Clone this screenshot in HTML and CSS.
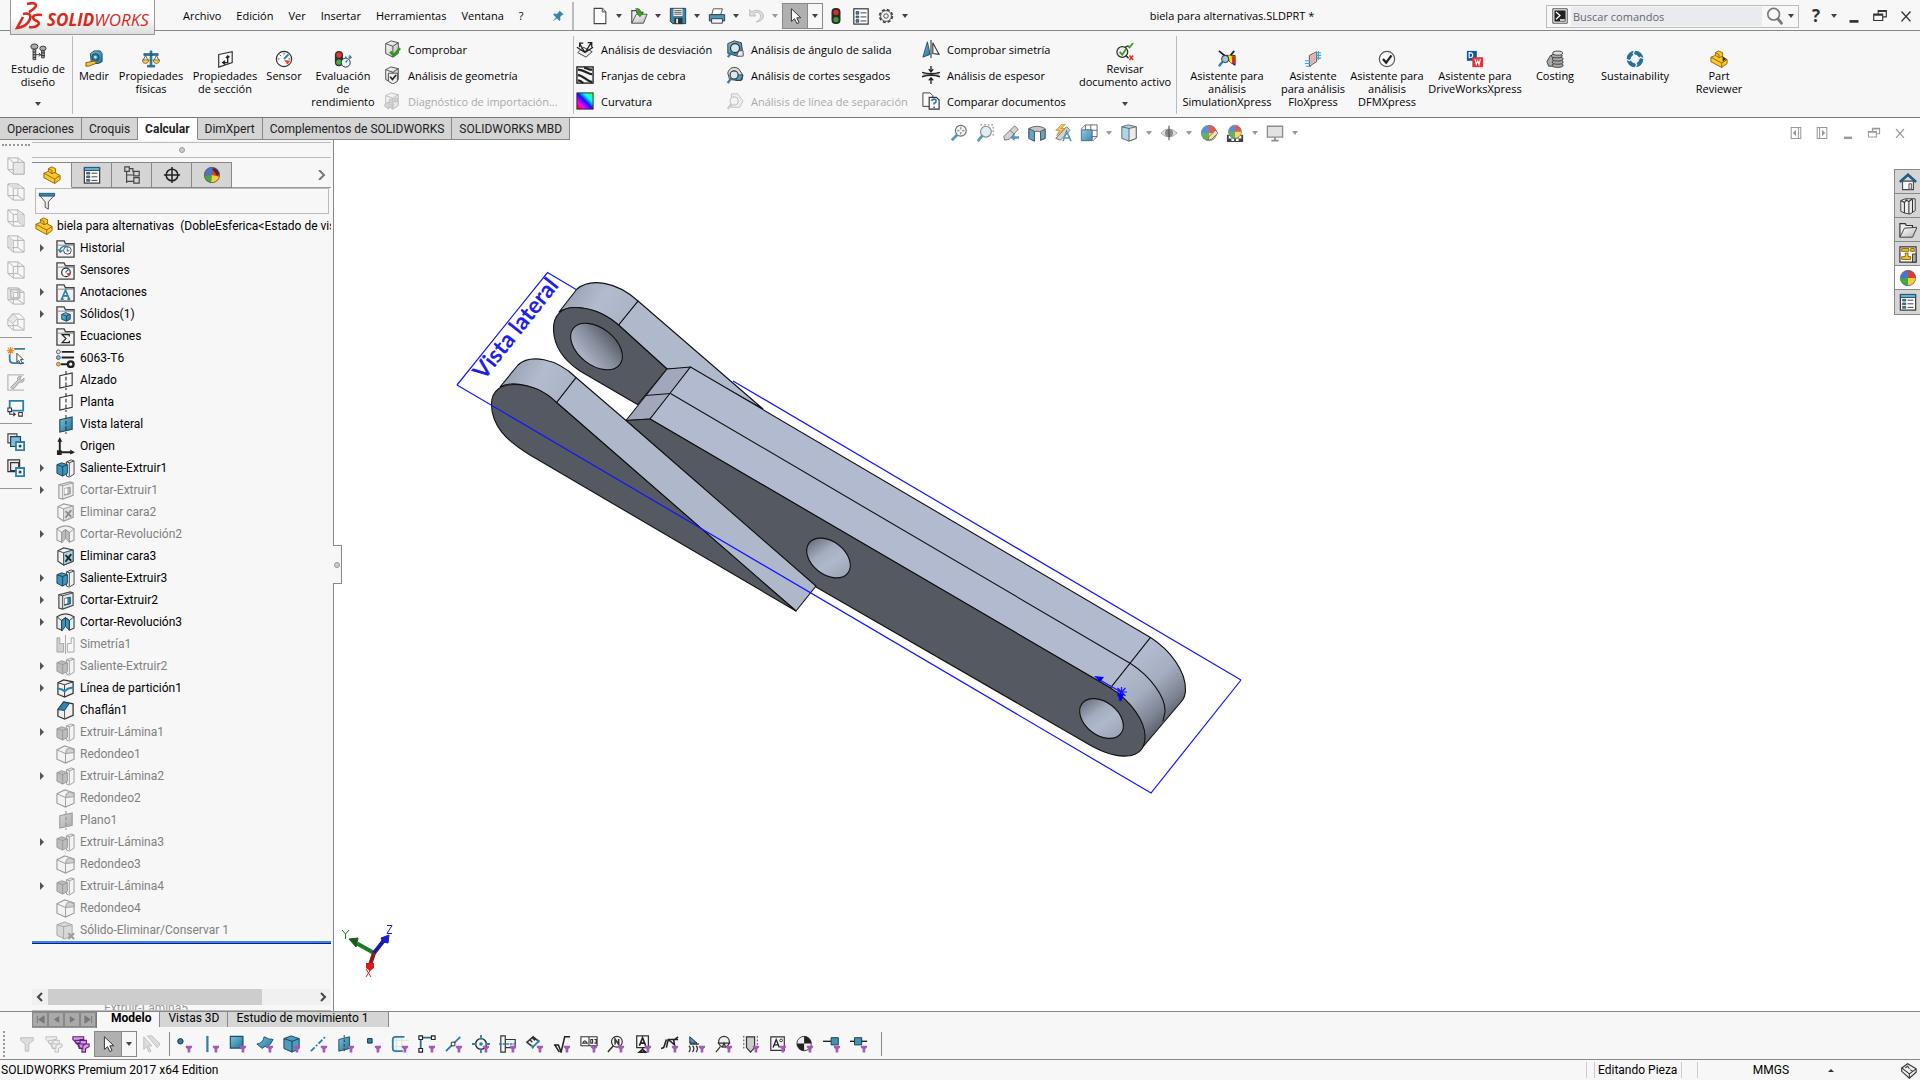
FILE: index.html
```html
<!DOCTYPE html>
<html lang="es">
<head>
<meta charset="utf-8">
<title>biela para alternativas.SLDPRT</title>
<link rel="stylesheet" href="styles.css">
</head>
<body>
<svg class="defs" aria-hidden="true">
<defs>
<linearGradient id="g-blue" x1="0" y1="0" x2="1" y2="1"><stop offset="0" stop-color="#7cc4e0"/><stop offset="1" stop-color="#1f6f96"/></linearGradient>
<linearGradient id="g-gray" x1="0" y1="0" x2="1" y2="1"><stop offset="0" stop-color="#fff"/><stop offset="1" stop-color="#b8b8b8"/></linearGradient>
<linearGradient id="g-rain" x1="0" y1="1" x2="1" y2="0"><stop offset="0" stop-color="#f00"/><stop offset=".25" stop-color="#f0f"/><stop offset=".5" stop-color="#11f"/><stop offset=".7" stop-color="#0ff"/><stop offset="1" stop-color="#5f0"/></linearGradient>
<symbol id="fun" viewBox="0 0 20 20"><path d="M12 12h7v2l-2 1.500v4h-3v-4l-2-1.500z" fill="#a45bb8"/></symbol>
<symbol id="i-arrow" viewBox="0 0 20 20"><path d="M6 2l0 14 3.500-3 2.500 5.500 2.500-1.200-2.500-5.300h4.500z" fill="#fff" stroke="#333" stroke-width="1.100"/></symbol>
<symbol id="i-part" viewBox="0 0 20 20"><path d="M1 8l5-2V3l3.500-2L14 3v5l5 2.500V15l-6 4.500L1 13z" fill="#fbc72c" stroke="#8a6406"/><path d="M1 8l12 6.500 6-4M13 14.500v5M6 6l4 2.500V5L6 3M10 8.500L14 7" fill="none" stroke="#8a6406"/></symbol>
<symbol id="i-bolt" viewBox="0 0 20 20"><g fill="#aaa" stroke="#333"><ellipse cx="6" cy="4" rx="4" ry="3"/><path d="M4.500 7h3v11.500h-3z"/><ellipse cx="15.500" cy="6" rx="3.500" ry="2.500"/><path d="M14 8.500h3v8h-3z"/></g><path d="M4.500 10h3m-3 3h3m-3 3h3m6-5h4m-4 3h4M8 13h5l-2-2m2 2l-2 2" stroke="#222" fill="none"/></symbol>
<symbol id="i-medir" viewBox="0 0 20 20"><path d="M6 4l4-3h7l2 3v9l-4 2H7z" fill="url(#g-blue)" stroke="#1d4c66"/><circle cx="11.500" cy="8" r="4" fill="#2f81a8" stroke="#144"/><circle cx="11.500" cy="8" r="1.500" fill="#c7e6f2"/><path d="M1 14l11-2v3L4 18H1z" fill="#f4c33f" stroke="#7a5a10"/></symbol>
<symbol id="i-scale" viewBox="0 0 20 20"><path d="M9 1h2v16h3v2H6v-2h3zM2 4h16v2H2z" fill="#2d7fa8" stroke="#1a516e" stroke-width=".7"/><path d="M1 12l3-6 3 6zM13 12l3-6 3 6z" fill="none" stroke="#555"/><path d="M0 11h8q-1 4-4 4t-4-4zM12 11h8q-1 4-4 4t-4-4z" fill="#f5cd5a" stroke="#6b510f" stroke-width=".8"/></symbol>
<symbol id="i-sect" viewBox="0 0 20 20"><path d="M3 5l15-3v12L3 19z" fill="#fafafa" stroke="#333" stroke-width="1.300"/><path d="M8 14h5V7m-2 2l2-2.500L15 8M10 12l-2.500 2 2.500 2" fill="none" stroke="#222" stroke-width="1.500"/></symbol>
<symbol id="i-gauge" viewBox="0 0 20 20"><circle cx="10" cy="10" r="8.500" fill="#fdfdfd" stroke="#333" stroke-width="1.300"/><path d="M10 3v2M3 10h2M17 10h-2M5 5l1.500 1.500" stroke="#333"/><path d="M10 10l5-5" stroke="#2d7fa8" stroke-width="2"/><path d="M10 11l7 1-3 4z" fill="#e8412b"/></symbol>
<symbol id="i-eval" viewBox="0 0 20 20"><rect x="1" y="1" width="9" height="17" rx="4.500" fill="#333"/><circle cx="5.500" cy="5.500" r="3" fill="#e9352a"/><circle cx="5.500" cy="13.500" r="3" fill="#4caf3c"/><circle cx="13" cy="14" r="5" fill="#e7f3f9" stroke="#222"/><path d="M13 14l2-3M13 7v2M16 8h3l-2-2m2 2l-2 2" stroke="#2d7fa8" fill="none" stroke-width="1.300"/></symbol>
<symbol id="i-box" viewBox="0 0 20 20"><path d="M3 4l6-3 8 2v12l-6 4-8-4z" fill="url(#g-gray)" stroke="#444"/><path d="M3 4l8 3 6-4M11 7v12" fill="none" stroke="#444"/></symbol>
<symbol id="i-check" viewBox="0 0 20 20"><use href="#i-box"/><path d="M8 13l4 4 7-8" fill="none" stroke="#2f9a13" stroke-width="3"/></symbol>
<symbol id="i-geo" viewBox="0 0 20 20"><use href="#i-box"/><path d="M6 8h10v9l-5 3-5-3z" fill="#eee" stroke="#444"/><path d="M8 12l2.500 3 4-5" fill="none" stroke="#222" stroke-width="1.800"/></symbol>
<symbol id="i-diag" viewBox="0 0 20 20"><use href="#i-box"/><path d="M7 8h4v4H7zM13 7h3v4h-3zM1 15l5-4v2.500h5v3H6V19z" fill="#999" stroke="#555"/></symbol>
<symbol id="i-dev" viewBox="0 0 20 20"><path d="M2 14l6-6 10 5-7 6z" fill="#eee" stroke="#333"/><path d="M10 14L4 4M10 14l7-11M10 14L1 8M10 14l9-6M4 8V3.500h4M13 3h4.500v5" fill="none" stroke="#222" stroke-width="1.400"/></symbol>
<symbol id="i-zebra" viewBox="0 0 20 20"><rect x="1" y="1" width="18" height="18" fill="#f4f4f4" stroke="#222" stroke-width="1.500"/><path d="M2 4c8 0 12 6 16 5M2 10c6 0 10 7 16 8M9 2c4 0 6 3 9 2M2 16c3 0 5 2 6 3" fill="none" stroke="#222" stroke-width="2.500"/></symbol>
<symbol id="i-curv" viewBox="0 0 20 20"><rect x="1" y="1" width="18" height="18" fill="url(#g-rain)" stroke="#222"/></symbol>
<symbol id="i-draft" viewBox="0 0 20 20"><path d="M2 4l7-3 8 2 2 14-6 1-11-3z" fill="url(#g-blue)" stroke="#333"/><path d="M14 12h5v6h-7z" fill="#eee" stroke="#555"/><circle cx="10" cy="9" r="5" fill="#d8e8ef" stroke="#333" stroke-width="1.300"/><path d="M7 13l-5 6" stroke="#2d7fa8" stroke-width="2.500"/></symbol>
<symbol id="i-under" viewBox="0 0 20 20"><path d="M2 8C3 2 9 0 14 3l4 6v6l-5 1-9-1z" fill="#ddd" stroke="#333"/><path d="M12 10h7l-2 6h-6z" fill="url(#g-blue)" stroke="#234"/><circle cx="9" cy="10" r="4.500" fill="#d8e8ef" stroke="#333" stroke-width="1.300"/><path d="M6 13l-4 6" stroke="#2d7fa8" stroke-width="2.500"/></symbol>
<symbol id="i-part-line" viewBox="0 0 20 20"><path d="M6 2h7l6 8-4 7H6z" fill="#ddd" stroke="#555"/><circle cx="9" cy="10" r="4.500" fill="#eee" stroke="#444"/><path d="M6 13l-4 6" stroke="#777" stroke-width="2.500"/></symbol>
<symbol id="i-sym" viewBox="0 0 20 20"><path d="M1 19L6 2l3 14z" fill="url(#g-blue)" stroke="#1d4c66"/><path d="M19 16L12 3v12zM10 0v20" fill="none" stroke="#333" stroke-width="1.200"/></symbol>
<symbol id="i-thick" viewBox="0 0 20 20"><path d="M1 7c5 2 13 2 18 0v5c-5-2-13-2-18 0z" fill="#bbb"/><path d="M0 7c6 2 14 2 20 0M0 12c6-2 14-2 20 0M10 0v6M7.500 3.500L10 6.500l2.500-3M10 20v-7M7.500 16l2.500-3 2.500 3" fill="none" stroke="#222" stroke-width="1.500"/></symbol>
<symbol id="i-comp" viewBox="0 0 20 20"><path d="M1 1h8l3 3v12H1z" fill="#fafafa" stroke="#333"/><path d="M8 6h8l3 3v10H8z" fill="#fafafa" stroke="#333" stroke-width="1.300"/><path d="M11 10q0-2 2.500-2t2 2.500q0 1.500-2 2v1.500M13.500 16v2" fill="none" stroke="#2d7fa8" stroke-width="2"/></symbol>
<symbol id="i-rev" viewBox="0 0 20 20"><circle cx="7" cy="10" r="6" fill="#f0f0f0" stroke="#333" stroke-width="1.400"/><path d="M4 10l3 3 4-6M13 3l2 2 4-5" fill="none" stroke="#3c9c1e" stroke-width="2"/><path d="M10 5l3-2m-2 11l3 3" stroke="#222" stroke-width="1.500"/><path d="M15 14l4 5m0-5l-4 5" stroke="#d8341c" stroke-width="1.800"/></symbol>
<symbol id="i-sim" viewBox="0 0 20 20"><path d="M3 3l5 3h11v11l-5-3z" fill="url(#g-rain)" stroke="#222"/><path d="M11 6h5v9l-3-2z" fill="#fe0"/><path d="M15 7h4v9l-3-2z" fill="#e22"/><path d="M1 1l6 5M18 1l-4 5" stroke="#222" stroke-width="2"/><circle cx="8" cy="10" r="4" fill="#9fc7d8" stroke="#222"/><path d="M5 13l-4 5" stroke="#2d7fa8" stroke-width="2.500"/></symbol>
<symbol id="i-flo" viewBox="0 0 20 20"><path d="M6 6l8-4v11l-8 5z" fill="#f4dcd8" stroke="#444"/><path d="M8 6v10M10 5v10M12 4v10" stroke="#d98a80" fill="none"/><path d="M1 12h6M1 15h6M2 18h6M13 3h6M13 6h6M13 9h6M16 1v10" stroke="#38a5d8" stroke-width="1.200"/></symbol>
<symbol id="i-dfm" viewBox="0 0 20 20"><circle cx="10" cy="10" r="8.500" fill="#fbfbfb" stroke="#555" stroke-width="1.300"/><path d="M5.500 10l3.500 4 6-8" fill="none" stroke="#222" stroke-width="2.500"/></symbol>
<symbol id="i-dw" viewBox="0 0 20 20"><path d="M1 1h11v11H1z" fill="#0a56a5"/><path d="M7 8h12v11H7z" fill="#ee3135"/><path d="M3.500 3v5.500q4 0 4-2.700t-4-2.800zM10 10l1.500 6 1.500-4 1.500 4 1.500-6" fill="none" stroke="#fff" stroke-width="1.300"/></symbol>
<symbol id="i-cost" viewBox="0 0 20 20"><g fill="#aaa" stroke="#333"><path d="M1 13l4-7h5l-2 12H3z"/><ellipse cx="13" cy="17" rx="6" ry="2.300"/><ellipse cx="13" cy="13.500" rx="6" ry="2.300"/><ellipse cx="13" cy="10" rx="6" ry="2.300"/><ellipse cx="12" cy="6.500" rx="6" ry="2.300"/><ellipse cx="13" cy="3.500" rx="5.500" ry="2.300" fill="#ddd"/></g></symbol>
<symbol id="i-sust" viewBox="0 0 20 20"><circle cx="10" cy="10" r="7" fill="none" stroke="#2b7096" stroke-width="4.500"/><path d="M10 0l-2 4 3 3M20 10l-4-2-3 3M10 20l2-4-3-3M0 10l4 2 3-3" fill="none" stroke="#e8f2f7" stroke-width="1.400"/></symbol>
<symbol id="i-prev" viewBox="0 0 20 20"><use href="#i-part"/><path d="M14 7l4 3-4 3z" fill="#333"/></symbol>
<symbol id="i-new" viewBox="0 0 20 20"><path d="M3.500 1.500h9l4 4V18.500h-13z" fill="#fdfdfd" stroke="#444" stroke-width="1.200"/><path d="M12.500 1.500v4h4" fill="#ddd" stroke="#444"/></symbol>
<symbol id="i-open" viewBox="0 0 20 20"><path d="M2 18V4h5l1 2h6v3" fill="#eee" stroke="#444" stroke-width="1.200"/><path d="M2 18L7 8h12l-4 10z" fill="url(#g-gray)" stroke="#444"/><path d="M6 2c5-1 6 2 6 4h3l-4 5-4-5h2c0-2-1-3-3-4z" fill="#3da321" stroke="#226a0d" stroke-width=".6"/></symbol>
<symbol id="i-save" viewBox="0 0 20 20"><path d="M1.500 1.500h17v17H4l-2.500-2.500z" fill="#3b87ab" stroke="#234"/><path d="M5 2h10v8H5z" fill="#eee"/><path d="M6 4h8M6 6h8M6 8h8" stroke="#555"/><path d="M6 12h9v7H6z" fill="#333"/><path d="M8 13h2v5H8z" fill="#eee"/></symbol>
<symbol id="i-print" viewBox="0 0 20 20"><path d="M6 2h10l-2 7H4z" fill="#fff" stroke="#444"/><path d="M1.500 8.500h17v7h-17z" fill="#4a98bd" stroke="#234"/><path d="M4 13h12v5H4z" fill="#f5f5f5" stroke="#333"/></symbol>
<symbol id="i-undo" viewBox="0 0 20 20"><path d="M3 3v7h7l-2.500-2.500c3-3 8-1 7.500 3 0 3-2 5-5 6 6 0 9-4 8-8C17 4 10 2 5.500 5.500z" fill="#ddd" stroke="#bbb"/></symbol>
<symbol id="i-light" viewBox="0 0 20 20"><rect x="5" y="1" width="10" height="18" rx="4.500" fill="#2a2a2a"/><circle cx="10" cy="6" r="3" fill="#d62d20"/><circle cx="10" cy="14" r="3" fill="#3c9b35"/></symbol>
<symbol id="i-list" viewBox="0 0 20 20"><rect x="2" y="2" width="16" height="17" fill="#fafafa" stroke="#333" stroke-width="1.300"/><path d="M4.500 5h3v3h-3zM4.500 10h3v2h-3zM4.500 14h3v3h-3z" fill="#3b87ab" stroke="#234" stroke-width=".7"/><path d="M9.500 6.500H16M9.500 11H16M9.500 15.500H16" stroke="#333"/></symbol>
<symbol id="i-prop" viewBox="0 0 20 20"><rect x="1.500" y="2" width="17" height="17" fill="#fafafa" stroke="#333" stroke-width="1.300"/><path d="M4 7h3.500v2H4zM4 11h3.500v2H4zM4 15h3.500v2H4z" fill="#3b87ab" stroke="#234" stroke-width=".7"/><path d="M9.500 8H16M9.500 12H16M9.500 16H16" stroke="#333"/><path d="M1.500 1.500h17V5h-17z" fill="#5fb2d5" stroke="#1d4c66"/></symbol>
<symbol id="i-gear" viewBox="0 0 20 20"><circle cx="10" cy="10" r="7" fill="none" stroke="#444" stroke-width="2" stroke-dasharray="3.300 2.200"/><circle cx="10" cy="10" r="6" fill="#f2f2f2" stroke="#444"/><circle cx="10" cy="10" r="2.500" fill="#f7f7f7" stroke="#444"/></symbol>
<symbol id="i-pin" viewBox="0 0 20 20"><path d="M12 2l6 6-2 .5-3 3 .5 4-1.500 1.500L3 8l1.500-1.500 4 .5 3-3zM7 12l1.500 1.500L2 18z" fill="#3b82ab"/></symbol>
<symbol id="i-mag" viewBox="0 0 20 20"><circle cx="8.500" cy="8" r="6.500" fill="none" stroke="#777" stroke-width="1.800"/><path d="M13 13l5 6" stroke="#777" stroke-width="3"/></symbol>
<symbol id="i-cmd" viewBox="0 0 20 20"><path d="M1 1h18v18H1z" fill="#fff" stroke="#222"/><path d="M3 3h14v14H3z" fill="#222"/><path d="M5 5l5 4.500L5 14M10 15h6" stroke="#fff" stroke-width="1.600" fill="none"/></symbol>
<symbol id="i-min" viewBox="0 0 20 20"><path d="M5 14.500h10v3H5z" fill="currentColor"/></symbol>
<symbol id="i-rest" viewBox="0 0 20 20"><path d="M3 8h10v7H3zM3 9h10M8 8V4h9v7h-4M8 5h9" fill="none" stroke="currentColor" stroke-width="1.300"/></symbol>
<symbol id="i-x" viewBox="0 0 20 20"><path d="M5 5l10 11M15 5L5 16" stroke="currentColor" stroke-width="1.500"/></symbol>
<symbol id="i-dockl" viewBox="0 0 20 20"><path d="M4 3h12v14H4zM13 3v14" fill="none" stroke="#999" stroke-width="1.300"/><path d="M10 6v8l-4-4z" fill="#999"/></symbol>
<symbol id="i-dockr" viewBox="0 0 20 20"><path d="M4 3h12v14H4zM7 3v14" fill="none" stroke="#999" stroke-width="1.300"/><path d="M10 6v8l4-4z" fill="#999"/></symbol>
<symbol id="i-zfit" viewBox="0 0 20 20"><circle cx="12" cy="7.500" r="6" fill="#f2f2f2" stroke="#555" stroke-width="1.300"/><path d="M12 3.500v8M8 7.500h8" stroke="#444" stroke-dasharray="2.500 3"/><path d="M8 12l-6 6" stroke="#3b87ab" stroke-width="3"/></symbol>
<symbol id="i-zarea" viewBox="0 0 20 20"><path d="M5 1h14v14" fill="none" stroke="#555" stroke-dasharray="2 2"/><circle cx="11" cy="8.500" r="6" fill="#dfe9ee" stroke="#777" stroke-width="1.300"/><path d="M7 13l-5 6" stroke="#3b87ab" stroke-width="3"/></symbol>
<symbol id="i-zprev" viewBox="0 0 20 20"><path d="M2 14L14 2l4 4-10 11-5 1z" fill="#ccc" stroke="#555"/><path d="M9 7l5 5" stroke="#555"/><path d="M9 15l5-4v2.500h5v3h-5V19z" fill="#3b87ab"/></symbol>
<symbol id="i-secv" viewBox="0 0 20 20"><path d="M1 5q9-5 18 0v11l-5 2V9q-4-2-7 0v10l-6-3z" fill="#bbb" stroke="#444"/><path d="M1 5l6 3v11l-6-3zM14 8l5-2v10l-5 2z" fill="#4a98bd" stroke="#234"/></symbol>
<symbol id="i-dyn" viewBox="0 0 20 20"><path d="M2 16L14 3l4 4L7 18z" fill="#ccc" stroke="#555"/><path d="M9 0L2 7h4l-3 6 9-8H8l5-5z" fill="#ffb52e" stroke="#a25b00" stroke-width=".7"/><path d="M10 19l4-11 5 11M12 15.500h5" stroke="#3b87ab" stroke-width="1.800" fill="none"/></symbol>
<symbol id="i-cube" viewBox="0 0 20 20"><path d="M6 1h13v13H6zM12 1v13M6 7h13M1 6l5-5M14 19l5-5" fill="none" stroke="#444"/><path d="M1.500 6.500h12v12h-12z" fill="url(#g-blue)" stroke="#1d4c66"/></symbol>
<symbol id="i-shade" viewBox="0 0 20 20"><path d="M2 3l7-2 9 2v13l-8 3-8-3z" fill="#9dd0e6" stroke="#444"/><path d="M10 5l8-2v13l-8 3z" fill="#e8e8e8" stroke="#444"/><path d="M2 3l8 2" stroke="#444"/></symbol>
<symbol id="i-eye" viewBox="0 0 20 20"><path d="M1 10q9-9 18 0-9 9-18 0z" fill="#ddd" stroke="#999"/><circle cx="10" cy="10" r="4.500" fill="#777"/><path d="M10 2v16" stroke="#333" stroke-width="1.200"/></symbol>
<symbol id="i-ball" viewBox="0 0 20 20"><circle cx="10" cy="10" r="8.500" fill="#3f78d8"/><path d="M10 10V1.500a8.500 8.500 0 0 1 8.500 8.500z" fill="#e23b30"/><path d="M10 10h8.500A8.500 8.500 0 0 1 10 18.500z" fill="#fbcf3a"/><path d="M10 10v8.500A8.500 8.500 0 0 1 1.500 10z" fill="#44a83d"/><circle cx="10" cy="10" r="8.500" fill="none" stroke="#666" stroke-width=".8"/></symbol>
<symbol id="i-disp" viewBox="0 0 20 20"><circle cx="10" cy="10" r="8.500" fill="#e23b30"/><path d="M10 10H1.500A8.500 8.500 0 0 1 10 1.500z" fill="#3f78d8"/><path d="M10 10l-8.500 1A8.500 8.500 0 0 0 9 18.500z" fill="#44a83d"/><path d="M10 10l-1 8.500A8.500 8.500 0 0 0 18 12z" fill="#fbcf3a"/><path d="M10 3q6-2 8 6l-2 2z" fill="#333"/><circle cx="10" cy="10" r="8.500" fill="none" stroke="#555" stroke-width=".8"/></symbol>
<symbol id="i-app" viewBox="0 0 20 20"><use href="#i-ball"/><path d="M9 18l1-4 7-7 3 3-7 7z" fill="#f2d9a0" stroke="#555"/></symbol>
<symbol id="i-scene" viewBox="0 0 20 20"><path d="M1 12h18v8H1z" fill="#222"/><path d="M3 13h3v3H3zM14 13h3v3h-3zM6 16h3v3H6zM11 16h3v3h-3z" fill="#fff"/><use href="#i-ball" width="17" height="17" x="1.500"/></symbol>
<symbol id="i-mon" viewBox="0 0 20 20"><path d="M1.500 2.500h17v12h-17z" fill="#ddd" stroke="#777" stroke-width="1.400"/><path d="M10 15v4M6 18.500h8" stroke="#777" stroke-width="2"/></symbol>
<symbol id="i-tree" viewBox="0 0 20 20"><path d="M2 1h5v5H2zM4 6v13M4 10h8M4 17h8M12 6h6v5h-6zM12 13h6v6h-6zM7 3h4v4" fill="none" stroke="#444" stroke-width="1.300"/></symbol>
<symbol id="i-cross" viewBox="0 0 20 20"><circle cx="10" cy="10" r="6.500" fill="none" stroke="#222" stroke-width="1.700"/><path d="M10 1v18M1 10h18" stroke="#222" stroke-width="1.700"/></symbol>
<symbol id="i-filter" viewBox="0 0 20 20"><path d="M2 4h16l-6.500 7v8L8 17v-6z" fill="#eee" stroke="#444"/><path d="M1.500 1.500h17v3h-17z" fill="#2f86b0" stroke="#1d5674"/></symbol>
<symbol id="i-fold" viewBox="0 0 20 20"><path d="M1 19V2h7.500l1.500 3h9v14z" fill="#f3f3f3" stroke="#444" stroke-width="1.400"/><path d="M1.500 6.500h17" stroke="#888"/></symbol>
<symbol id="i-fhist" viewBox="0 0 20 20"><use href="#i-fold"/><circle cx="12" cy="12" r="4" fill="#fff" stroke="#444"/><path d="M12 10v2.500h2M4 13c0-5 6-7 9-4M2.500 11l2 3 2.500-2.500" fill="none" stroke="#2d7fa8" stroke-width="1.400"/></symbol>
<symbol id="i-fsens" viewBox="0 0 20 20"><use href="#i-fold"/><circle cx="10.500" cy="12" r="4.500" fill="#fff" stroke="#333" stroke-width="1.300"/><path d="M10 12l3-3" stroke="#2d7fa8" stroke-width="1.500"/><path d="M11 13l4-.5-2 3.500z" fill="#e33"/></symbol>
<symbol id="i-fann" viewBox="0 0 20 20"><use href="#i-fold"/><path d="M6 17l4-9.500L14 17M7.500 13.500h5M5 17h3m4 0h3" fill="none" stroke="#2d7fa8" stroke-width="1.700"/></symbol>
<symbol id="i-fsol" viewBox="0 0 20 20"><use href="#i-fold"/><path d="M6 10l4-2 5 2v5l-4 2-5-2z" fill="url(#g-blue)" stroke="#1d4c66"/><path d="M6 10l5 1.500 4-1.500m-4 1.500V17" fill="none" stroke="#1d4c66"/></symbol>
<symbol id="i-feq" viewBox="0 0 20 20"><use href="#i-fold"/><path d="M14 10V8H6.500l4 4.200-4 4.300H14v-2" fill="none" stroke="#222" stroke-width="1.300"/></symbol>
<symbol id="i-mat" viewBox="0 0 20 20"><path d="M6 3h13M6 9h13M5 16h8" stroke="#222" stroke-width="2"/><circle cx="2.500" cy="3" r="2" fill="#eee" stroke="#555"/><circle cx="2.500" cy="9" r="2" fill="#6ec3e8" stroke="#357"/><circle cx="2.500" cy="16" r="2" fill="#fb3" stroke="#875"/><circle cx="15.500" cy="16" r="3" fill="none" stroke="#222" stroke-width="2.500"/></symbol>
<symbol id="i-plane" viewBox="0 0 20 20"><path d="M4 5l13-3v13L4 18z" fill="#fbfbfb" stroke="#333" stroke-width="1.200"/><path d="M10.500 0v20" stroke="#333" stroke-width="1.200" stroke-dasharray="4 2"/></symbol>
<symbol id="i-planeb" viewBox="0 0 20 20"><path d="M4 5l13-3v13L4 18z" fill="url(#g-blue)" stroke="#1d4c66" stroke-width="1.200"/><path d="M10.500 0v20" stroke="#222" stroke-dasharray="4 2"/></symbol>
<symbol id="i-orig" viewBox="0 0 20 20"><path d="M4 2v14h14" fill="none" stroke="#222" stroke-width="2"/><path d="M4 0l2.500 5h-5zM20 16l-5-2.500v5zM1 14h5v5H1z" fill="#222"/></symbol>
<symbol id="i-ext" viewBox="0 0 20 20"><path d="M11 3l5-2 3 1v14l-5 3-3-1z" fill="#f2f2f2" stroke="#444"/><path d="M14 4v14M11 3l3 1 5-2" fill="none" stroke="#444"/><path d="M1 6l5-2 6 2v9l-5 3-6-3z" fill="#3e94bb" stroke="#1c4257"/><path d="M1 6l6 2 5-2M7 8v10" fill="none" stroke="#1c4257"/></symbol>
<symbol id="i-cut" viewBox="0 0 20 20"><path d="M3 4l12-3 3 1v13L7 19l-4-1z" fill="#e6e6e6" stroke="#444" stroke-width="1.200"/><path d="M3 4l4 1 11-3M7 5v14" fill="none" stroke="#444"/><path d="M9 8l6-1.500v7L9 15z" fill="#2f86b0" stroke="#1c4257"/><path d="M9 8h3v5l-3 1z" fill="#fff"/></symbol>
<symbol id="i-del" viewBox="0 0 20 20"><path d="M2 4l6-3 10 2v12L8 19l-6-4z" fill="#f4f4f4" stroke="#444" stroke-width="1.200"/><path d="M8 6l10-3v12L8 19z" fill="#a8d2e5" stroke="#444"/><path d="M2 4l6 2" stroke="#444"/><path d="M10 8.500l6 6m0-7l-6 8" stroke="#222" stroke-width="2"/></symbol>
<symbol id="i-revc" viewBox="0 0 20 20"><path d="M1 4q9-6 18 0v12l-5 2V8l-4-3-4 3v10l-5-2z" fill="#ededed" stroke="#444" stroke-width="1.200"/><path d="M6 8l4-3 4 3v10l-4-4-4 5z" fill="#3e94bb" stroke="#1c4257"/><path d="M10 5v9M1 4l5 4M19 4l-5 4" stroke="#1c4257"/></symbol>
<symbol id="i-mir" viewBox="0 0 20 20"><path d="M1 3h3v6h4v9H1z" fill="#aaa" stroke="#555"/><path d="M19 3h-3v6h-4v9h7zM10 0v20" fill="none" stroke="#555"/></symbol>
<symbol id="i-split" viewBox="0 0 20 20"><path d="M2 4l6-3 10 2v12L9 19l-7-3z" fill="#f0f0f0" stroke="#333" stroke-width="1.300"/><path d="M2 4l7 2 9-3M9 6v13" fill="none" stroke="#333"/><path d="M2 10l4 1 3 2 4-3 5-1" fill="none" stroke="#2383b3" stroke-width="2"/></symbol>
<symbol id="i-cham" viewBox="0 0 20 20"><path d="M2 9l6-8 10 2v12L9 19l-7-3z" fill="#f0f0f0" stroke="#333" stroke-width="1.300"/><path d="M2 9l6-8 6 1.500L9 10z" fill="#2f86b0" stroke="#1c4257"/><path d="M9 10v9" stroke="#555"/></symbol>
<symbol id="i-fil" viewBox="0 0 20 20"><path d="M1 5l8-4 10 3v11l-9 4-9-4z" fill="#f0f0f0" stroke="#444" stroke-width="1.200"/><path d="M10 9q0-5 4-6l5 2v3z" fill="#aaa" stroke="#444"/><path d="M1 5l9 4v10" fill="none" stroke="#444"/></symbol>
<symbol id="i-sdel" viewBox="0 0 20 20"><path d="M1 4l8-3 8 3v11l-8 4-8-4z" fill="#bbb" stroke="#555"/><path d="M1 4l7 2 9-2M8 6v12" fill="none" stroke="#555"/><path d="M13 13l6 6m0-6l-6 6" stroke="#444" stroke-width="2.200"/></symbol>
<symbol id="i-wire" viewBox="0 0 20 20"><path d="M1 1l11 0 7 5v13H7L1 14zM7 6h12M7 6v13M1 1l6 5M12 1v13M1 14h11l7 5" fill="none" stroke="#888" stroke-width="1.100"/></symbol>
<symbol id="i-wire1" viewBox="0 0 20 20"><use href="#i-wire"/><path d="M7 6h12v13H7z" fill="#ddd" stroke="#888"/></symbol>
<symbol id="i-wire2" viewBox="0 0 20 20"><use href="#i-wire"/><path d="M2 2h9l5 4H7z" fill="#ccc"/></symbol>
<symbol id="i-wire3" viewBox="0 0 20 20"><use href="#i-wire"/><path d="M12 2l6 5v10l-6-4z" fill="#ccc"/></symbol>
<symbol id="i-wire4" viewBox="0 0 20 20"><use href="#i-wire"/><path d="M2 2l4 4v12l-4-5z" fill="#ccc"/></symbol>
<symbol id="i-wire5" viewBox="0 0 20 20"><use href="#i-wire"/><path d="M4 3h10v9H4z" fill="none" stroke="#999" stroke-width="2"/></symbol>
<symbol id="i-wire6" viewBox="0 0 20 20"><path d="M6 1h8l5 5v13H7l-6-5V7zM7 12v7M12 7h7M12 7v7l7 5M1 14h11" fill="none" stroke="#888" stroke-width="1.100"/><path d="M1 7l6-6 5 5-6 6z" fill="#ddd" stroke="#888"/></symbol>
<symbol id="i-skn" viewBox="0 0 20 20"><path d="M8 2h12M3 8v6q0 4 5 4h11" fill="none" stroke="#2d7fa8" stroke-width="2"/><path d="M4 0v8M0 4h8M1 1l6 6M7 1L1 7" stroke="#e8871a" stroke-width="1.300"/><path d="M11 7v10l2-2 2 4 2-1-2-4h3z" fill="#fff" stroke="#333"/></symbol>
<symbol id="i-wrench" viewBox="0 0 20 20"><path d="M19 2H1v17h18" fill="none" stroke="#bbb" stroke-width="1.500"/><path d="M4 16l8-8c-1-4 2-5 4-4l-2 3 2 1 3-2c0 4-2 5-5 4l-7 8z" fill="#ccc" stroke="#999"/></symbol>
<symbol id="i-conv" viewBox="0 0 20 20"><path d="M3 2h15v11H3z" fill="#fafafa" stroke="#2d7fa8" stroke-width="2"/><path d="M1 10h4v4H1zM13 15h4v4h-4zM3 14v3h6l-2-2m2 2l-2 2" fill="#fff" stroke="#333" stroke-width="1.200"/></symbol>
<symbol id="i-stack" viewBox="0 0 20 20"><path d="M1 1h10v10H1z" fill="#eee" stroke="#444" stroke-width="1.300"/><path d="M4 4h11v11H4z" fill="#7fbdd8" stroke="#1c4257" stroke-width="1.300"/><path d="M10 10h9v9h-9z" fill="#fff" stroke="#2d7fa8" stroke-width="2"/><path d="M13 13h3v3h-3z" fill="#1d4c66"/></symbol>
<symbol id="i-stackw" viewBox="0 0 20 20"><path d="M1 1h13v13H1zM4 4h9v9H4z" fill="#eee" stroke="#333" stroke-width="1.300"/><path d="M10 10h9v9h-9z" fill="#fff" stroke="#2d7fa8" stroke-width="2"/><path d="M13 13h3v3h-3z" fill="#1d4c66"/></symbol>
<symbol id="i-home" viewBox="0 0 20 20"><path d="M4 9h12v9.500H4z" fill="#fff" stroke="#444" stroke-width="1.200"/><path d="M11 12h3v6h-3z" fill="#ddd" stroke="#555"/><path d="M1 10l9-8 9 8" fill="none" stroke="#1f5f86" stroke-width="3"/></symbol>
<symbol id="i-books" viewBox="0 0 20 20"><path d="M2 4l5-2 5 0 6 0v13l-6 4-5-1-5-2z" fill="#eee" stroke="#333"/><path d="M2 4l4 2v12M6 6l3-3M7 3l4 2v14M11 5l4-3M15 3v14" fill="none" stroke="#333" stroke-width="1.200"/></symbol>
<symbol id="i-folder" viewBox="0 0 20 20"><path d="M1 18V3h6l1 2h7v4" fill="#eee" stroke="#333" stroke-width="1.300"/><path d="M1 18L6 8l14-1-5 11z" fill="url(#g-gray)" stroke="#333"/></symbol>
<symbol id="i-pal" viewBox="0 0 20 20"><path d="M1 2h18v17H1z" fill="#fff" stroke="#333" stroke-width="1.300"/><path d="M3 4h8v3H3zM13 4h4v3h-4zM7 9h3v4h3v3H3v-3h4z" fill="#fbc72c" stroke="#7a5a00"/><path d="M15 10h4v9h-4z" fill="#aaa" stroke="#333"/></symbol>
<symbol id="i-f1" viewBox="0 0 20 20"><path d="M3 3h14v3l-5 4v8H8v-8L3 6z" fill="#ddd" stroke="#bbb"/></symbol>
<symbol id="i-f3" viewBox="0 0 20 20"><path d="M1 2h12v3H9v4H5L1 5zM4 6h12v3l-4 3v3H8v-3L4 9zM7 10h12v3l-4 2v4h-4v-4l-4-2z" fill="#eee" stroke="#bbb"/></symbol>
<symbol id="i-f3p" viewBox="0 0 20 20"><path d="M1 2h12v3H9v4H5L1 5zM4 6h12v3l-4 3v3H8v-3L4 9zM7 10h12v3l-4 2v4h-4v-4l-4-2z" fill="#d59ae6" stroke="#5e1f78" stroke-width="1.200"/></symbol>
<symbol id="i-selx" viewBox="0 0 20 20"><path d="M2 2v14l3-3 3 6 2-1-3-6h4zM6 1h5l9 9-3 4z" fill="#ddd" stroke="#bbb"/></symbol>
<symbol id="b1" viewBox="0 0 20 20"><circle cx="6" cy="7" r="3" fill="#2d7fa8" stroke="#123"/><use href="#fun"/></symbol>
<symbol id="b2" viewBox="0 0 20 20"><path d="M6 1v18" stroke="#2d7fa8" stroke-width="2.500"/><use href="#fun"/></symbol>
<symbol id="b3" viewBox="0 0 20 20"><path d="M1.500 1.500h14v13h-14z" fill="url(#g-blue)" stroke="#1d4c66" stroke-width="1.300"/><use href="#fun"/></symbol>
<symbol id="b4" viewBox="0 0 20 20"><path d="M1 10q7-1 8-8 5 3 10 3-2 5-7 9-1-3-5 1z" fill="url(#g-blue)" stroke="#1d4c66"/><use href="#fun"/></symbol>
<symbol id="b5" viewBox="0 0 20 20"><path d="M1 4l8-3 9 3v11l-8 4-9-4z" fill="#4a9cc0" stroke="#16394b"/><path d="M1 4l9 3 8-3M10 7v12" fill="none" stroke="#16394b"/><use href="#fun"/></symbol>
<symbol id="b6" viewBox="0 0 20 20"><path d="M1 18L18 1" stroke="#2d7fa8" stroke-width="2" stroke-dasharray="6 2 2 2"/><use href="#fun"/></symbol>
<symbol id="b7" viewBox="0 0 20 20"><path d="M2 5l12-3v13L2 18z" fill="url(#g-blue)" stroke="#1d4c66"/><path d="M8 0v20" stroke="#222" stroke-dasharray="3 2"/><use href="#fun"/></symbol>
<symbol id="b8" viewBox="0 0 20 20"><path d="M4 4h5v5H4z" fill="#2d8fb8" stroke="#123"/><use href="#fun"/></symbol>
<symbol id="b9" viewBox="0 0 20 20"><path d="M6 0v20M12 0v20M0 6h20M0 13h20" stroke="#ddd"/><path d="M15 2H5Q2 2 2 5v10q0 3 3 3h8" fill="none" stroke="#2d7fa8" stroke-width="2"/><use href="#fun"/></symbol>
<symbol id="b10" viewBox="0 0 20 20"><path d="M3 3v14M5 3h12" stroke="#2d6f92" stroke-width="2"/><path d="M1 1h4v4H1zM15 1h4v4h-4zM1 15h4v4H1z" fill="#fff" stroke="#222" stroke-width="1.300"/><use href="#fun"/></symbol>
<symbol id="b11" viewBox="0 0 20 20"><path d="M1 18L17 2" stroke="#2d7fa8" stroke-width="2"/><path d="M7 8h4v4H7z" fill="#fff" stroke="#222"/><use href="#fun"/></symbol>
<symbol id="b12" viewBox="0 0 20 20"><circle cx="10" cy="10" r="6" fill="none" stroke="#222" stroke-width="1.500"/><circle cx="10" cy="10" r="2" fill="#2d7fa8"/><path d="M10 0v5M10 15v5M0 10h5M15 10h5" stroke="#2d7fa8" stroke-width="2"/><use href="#fun"/></symbol>
<symbol id="b13" viewBox="0 0 20 20"><path d="M2 1h5v18H2zM7 5h11v9H7z" fill="#f4f4f4" stroke="#333" stroke-width="1.300"/><path d="M0 10h18" stroke="#2d7fa8" stroke-width="1.500" stroke-dasharray="3 1"/><use href="#fun"/></symbol>
<symbol id="b14" viewBox="0 0 20 20"><path d="M6 12L1 8l7-6 6 5M4 5l3 3M7 3l3 3" fill="none" stroke="#333" stroke-width="1.700"/><path d="M7 14l8-8M6 11l2 4M12 5l3 3" stroke="#2d7fa8" stroke-width="2"/><use href="#fun"/></symbol>
<symbol id="b15" viewBox="0 0 20 20"><path d="M1 11h5l3 8 4-17h6M2 11l5 8" fill="none" stroke="#222" stroke-width="1.700"/><use href="#fun"/></symbol>
<symbol id="b16" viewBox="0 0 20 20"><path d="M1 2h18v10H1zM10 2v10M3 9q2-5 5 0zM12 5h2v4h-2zM16 5h2v4h-2" fill="#fafafa" stroke="#333" stroke-width="1.200"/><use href="#fun"/></symbol>
<symbol id="b17" viewBox="0 0 20 20"><circle cx="11" cy="7.500" r="6" fill="#f5f5f5" stroke="#333" stroke-width="1.300"/><path d="M9 10.500v-6l4 6v-6M7 12l-6 7" fill="none" stroke="#333" stroke-width="1.700"/><use href="#fun"/></symbol>
<symbol id="b18" viewBox="0 0 20 20"><path d="M3 1h13v13H3z" fill="#fafafa" stroke="#333" stroke-width="1.400"/><path d="M6 12l3.500-9L13 12M7.500 9h4M9.500 14v3M6 19h7l-3.500-3z" fill="none" stroke="#222" stroke-width="1.800"/><use href="#fun"/></symbol>
<symbol id="b19" viewBox="0 0 20 20"><path d="M0 15l3-1 3-9M6 14l2-9h11M8 5l7 6-1-6M15 5l4-3" fill="none" stroke="#222" stroke-width="1.700"/><use href="#fun"/></symbol>
<symbol id="b20" viewBox="0 0 20 20"><path d="M2 2v7h8z" fill="#4a98bd" stroke="#123"/><path d="M1 12q3 3 0 7M5 12q3 3 0 7M9 12q3 3 0 7M2 10h10" fill="none" stroke="#333" stroke-width="1.400"/><use href="#fun"/></symbol>
<symbol id="b21" viewBox="0 0 20 20"><circle cx="10" cy="7.500" r="6" fill="#eee" stroke="#333" stroke-width="1.300"/><path d="M3 9h14M8 14l2-5 2 5M6 13l-5 6" fill="none" stroke="#333" stroke-width="1.400"/><use href="#fun"/></symbol>
<symbol id="b22" viewBox="0 0 20 20"><path d="M5 2h9v12l-4.500 5L5 14z" fill="#ccc" stroke="#333" stroke-width="1.300"/><path d="M2 1v14M17 1v12" stroke="#333" stroke-dasharray="2 2"/><use href="#fun"/></symbol>
<symbol id="b23" viewBox="0 0 20 20"><path d="M2 2h15v15H2z" fill="#fafafa" stroke="#333" stroke-width="1.300"/><path d="M4.500 14l3.500-9 3.500 9M6 11h4" fill="none" stroke="#222" stroke-width="1.500"/><circle cx="13.500" cy="6" r="1.500" fill="none" stroke="#222"/><use href="#fun"/></symbol>
<symbol id="b24" viewBox="0 0 20 20"><circle cx="9" cy="9.500" r="8" fill="#eee" stroke="#333"/><path d="M9 9.500V1.500a8 8 0 0 1 8 8zM9 9.500v8a8 8 0 0 1-8-8z" fill="#222"/><use href="#fun"/></symbol>
<symbol id="b25" viewBox="0 0 20 20"><path d="M0 7h9" stroke="#222" stroke-width="1.500"/><path d="M9 3h8v8H9z" fill="#3e94bb" stroke="#1c2f3a"/><use href="#fun"/></symbol>
<symbol id="b26" viewBox="0 0 20 20"><path d="M0 7h19" stroke="#222" stroke-width="1.500"/><path d="M5 3h8v8H5z" fill="#3e94bb" stroke="#1c2f3a"/><use href="#fun"/></symbol>
<symbol id="i-tag" viewBox="0 0 20 20"><path d="M2 7L9 2l10 6v4l-8 7L2 11z" fill="#eee" stroke="#333" stroke-width="1.300"/><path d="M2 7l9 7 8-6M11 14v5M6 7l3-2 2 3M12 9l3 2" fill="none" stroke="#333" stroke-width="1.200"/></symbol>
</defs>
</svg>

<header class="titlebar">
  <div class="logo" aria-label="SOLIDWORKS">
    <svg class="logo-ds" viewBox="0 0 30 30"><path d="M12 2q8-2 9 1 0 3-7 7M8 12q9-2 7 5-3 8-13 9l6-11M27 13q-8-1-9 2 0 3 4 4 3 2 1 4-3 3-9 2" fill="none" stroke="#d8291c" stroke-width="2.600"/></svg>
    <span class="logo-text"><b>SOLID</b>WORKS</span>
  </div>
  <nav class="menu">
    <a href="#">Archivo</a><a href="#">Edición</a><a href="#">Ver</a><a href="#">Insertar</a><a href="#">Herramientas</a><a href="#">Ventana</a><a href="#">?</a>
    <button class="ib" aria-label="Fijar"><svg><use href="#i-pin"/></svg></button>
  </nav>
  <div class="quick">
    <button class="ib"><svg><use href="#i-new"/></svg></button><i class="dd"></i>
    <button class="ib"><svg><use href="#i-open"/></svg></button><i class="dd"></i>
    <button class="ib"><svg><use href="#i-save"/></svg></button><i class="dd"></i>
    <button class="ib"><svg><use href="#i-print"/></svg></button><i class="dd"></i>
    <button class="ib"><svg><use href="#i-undo"/></svg></button><i class="dd off"></i>
    <div class="sel"><button class="ib"><svg><use href="#i-arrow"/></svg></button><i class="dd"></i></div>
    <button class="ib"><svg><use href="#i-light"/></svg></button>
    <button class="ib"><svg><use href="#i-list"/></svg></button>
    <button class="ib"><svg><use href="#i-gear"/></svg></button><i class="dd"></i>
  </div>
  <h1 class="doc">biela para alternativas.SLDPRT *</h1>
  <div class="search">
    <svg class="cmd"><use href="#i-cmd"/></svg>
    <input type="text" aria-label="Buscar comandos" placeholder="Buscar comandos">
    <svg class="mag"><use href="#i-mag"/></svg><i class="dd"></i>
  </div>
  <div class="wctl">
    <button class="ib help">?</button><i class="dd"></i>
    <button class="ib"><svg><use href="#i-min"/></svg></button>
    <button class="ib"><svg><use href="#i-rest"/></svg></button>
    <button class="ib"><svg><use href="#i-x"/></svg></button>
  </div>
</header>

<section class="ribbon">
  <button class="big top w72 first"><svg><use href="#i-bolt"/></svg><span>Estudio de diseño</span><i class="dd"></i></button>
  <div class="rsep"></div>
  <button class="big w42"><svg><use href="#i-medir"/></svg><span>Medir</span></button>
  <button class="big w72"><svg><use href="#i-scale"/></svg><span>Propiedades físicas</span></button>
  <button class="big w76"><svg><use href="#i-sect"/></svg><span>Propiedades de sección</span></button>
  <button class="big w42"><svg><use href="#i-gauge"/></svg><span>Sensor</span></button>
  <button class="big w76 tight"><svg><use href="#i-eval"/></svg><span>Evaluación de rendimiento</span></button>
  <div class="rlist w192">
    <button><svg><use href="#i-check"/></svg>Comprobar</button>
    <button><svg><use href="#i-geo"/></svg>Análisis de geometría</button>
    <button disabled><svg><use href="#i-diag"/></svg>Diagnóstico de importación...</button>
  </div>
  <div class="rsep"></div>
  <div class="rlist w150">
    <button><svg><use href="#i-dev"/></svg>Análisis de desviación</button>
    <button><svg><use href="#i-zebra"/></svg>Franjas de cebra</button>
    <button><svg><use href="#i-curv"/></svg>Curvatura</button>
  </div>
  <div class="rlist w196">
    <button><svg><use href="#i-draft"/></svg>Análisis de ángulo de salida</button>
    <button><svg><use href="#i-under"/></svg>Análisis de cortes sesgados</button>
    <button disabled><svg><use href="#i-part-line"/></svg>Análisis de línea de separación</button>
  </div>
  <div class="rlist w154">
    <button><svg><use href="#i-sym"/></svg>Comprobar simetría</button>
    <button><svg><use href="#i-thick"/></svg>Análisis de espesor</button>
    <button><svg><use href="#i-comp"/></svg>Comparar documentos</button>
  </div>
  <button class="big top w102"><svg><use href="#i-rev"/></svg><span>Revisar<br>documento activo</span><i class="dd"></i></button>
  <div class="rsep"></div>
  <button class="big w100"><svg><use href="#i-sim"/></svg><span>Asistente para análisis SimulationXpress</span></button>
  <button class="big w72"><svg><use href="#i-flo"/></svg><span>Asistente para análisis FloXpress</span></button>
  <button class="big w76"><svg><use href="#i-dfm"/></svg><span>Asistente para análisis DFMXpress</span></button>
  <button class="big w100"><svg><use href="#i-dw"/></svg><span>Asistente para DriveWorksXpress</span></button>
  <button class="big w60"><svg><use href="#i-cost"/></svg><span>Costing</span></button>
  <button class="big w100"><svg><use href="#i-sust"/></svg><span>Sustainability</span></button>
  <button class="big w60 gap"><svg><use href="#i-prev"/></svg><span>Part Reviewer</span></button>
</section>

<div class="tabrow">
  <nav class="ctabs">
    <button>Operaciones</button><button>Croquis</button><button class="on">Calcular</button><button>DimXpert</button><button>Complementos de SOLIDWORKS</button><button>SOLIDWORKS MBD</button>
  </nav>
  <div class="hud">
    <button class="ib"><svg><use href="#i-zfit"/></svg></button>
    <button class="ib"><svg><use href="#i-zarea"/></svg></button>
    <button class="ib"><svg><use href="#i-zprev"/></svg></button>
    <button class="ib"><svg><use href="#i-secv"/></svg></button>
    <button class="ib"><svg><use href="#i-dyn"/></svg></button>
    <button class="ib"><svg><use href="#i-cube"/></svg></button><i class="dd off"></i>
    <button class="ib"><svg><use href="#i-shade"/></svg></button><i class="dd off"></i>
    <button class="ib"><svg><use href="#i-eye"/></svg></button><i class="dd off"></i>
    <button class="ib"><svg><use href="#i-app"/></svg></button>
    <button class="ib"><svg><use href="#i-scene"/></svg></button><i class="dd off"></i>
    <button class="ib"><svg><use href="#i-mon"/></svg></button><i class="dd off"></i>
  </div>
  <div class="dctl">
    <button class="ib"><svg><use href="#i-dockl"/></svg></button>
    <button class="ib"><svg><use href="#i-dockr"/></svg></button>
    <button class="ib"><svg><use href="#i-min"/></svg></button>
    <button class="ib"><svg><use href="#i-rest"/></svg></button>
    <button class="ib"><svg><use href="#i-x"/></svg></button>
  </div>
</div>

<main class="main">
  <aside class="side">
    <div class="grip"></div>
    <div class="sgroup dim">
      <svg><use href="#i-wire1"/></svg><svg><use href="#i-wire2"/></svg><svg><use href="#i-wire3"/></svg><svg><use href="#i-wire4"/></svg><svg><use href="#i-wire"/></svg><svg><use href="#i-wire5"/></svg><svg><use href="#i-wire6"/></svg>
    </div>
    <div class="sgroup line"><svg><use href="#i-skn"/></svg><svg><use href="#i-wrench"/></svg><svg><use href="#i-conv"/></svg></div>
    <div class="sgroup line last"><svg><use href="#i-stack"/></svg><svg><use href="#i-stackw"/></svg></div>
  </aside>
  <section class="panel">
    <div class="split"><i></i></div>
    <div class="ptabs">
      <button class="on"><svg><use href="#i-part"/></svg></button><button><svg><use href="#i-prop"/></svg></button><button><svg><use href="#i-tree"/></svg></button><button><svg><use href="#i-cross"/></svg></button><button><svg><use href="#i-disp"/></svg></button>
      <svg class="chev" viewBox="0 0 10 10"><path d="M3 0l5 5-5 5" fill="none" stroke="#777" stroke-width="2"/></svg>
    </div>
    <label class="filter"><svg><use href="#i-filter"/></svg><input type="text" aria-label="Filtro"></label>
    <div class="root"><svg><use href="#i-part"/></svg>biela para alternativas&nbsp; (DobleEsferica&lt;Estado de visualización&gt;)</div>
    <ul class="tree">
      <li class="ex"><svg><use href="#i-fhist"/></svg>Historial</li>
      <li><svg><use href="#i-fsens"/></svg>Sensores</li>
      <li class="ex"><svg><use href="#i-fann"/></svg>Anotaciones</li>
      <li class="ex"><svg><use href="#i-fsol"/></svg>Sólidos(1)</li>
      <li><svg><use href="#i-feq"/></svg>Ecuaciones</li>
      <li><svg><use href="#i-mat"/></svg>6063-T6</li>
      <li><svg><use href="#i-plane"/></svg>Alzado</li>
      <li><svg><use href="#i-plane"/></svg>Planta</li>
      <li><svg><use href="#i-planeb"/></svg>Vista lateral</li>
      <li><svg><use href="#i-orig"/></svg>Origen</li>
      <li class="ex"><svg><use href="#i-ext"/></svg>Saliente-Extruir1</li>
      <li class="ex off"><svg><use href="#i-cut"/></svg>Cortar-Extruir1</li>
      <li class="off"><svg><use href="#i-del"/></svg>Eliminar cara2</li>
      <li class="ex off"><svg><use href="#i-revc"/></svg>Cortar-Revolución2</li>
      <li><svg><use href="#i-del"/></svg>Eliminar cara3</li>
      <li class="ex"><svg><use href="#i-ext"/></svg>Saliente-Extruir3</li>
      <li class="ex"><svg><use href="#i-cut"/></svg>Cortar-Extruir2</li>
      <li class="ex"><svg><use href="#i-revc"/></svg>Cortar-Revolución3</li>
      <li class="off"><svg><use href="#i-mir"/></svg>Simetría1</li>
      <li class="ex off"><svg><use href="#i-ext"/></svg>Saliente-Extruir2</li>
      <li class="ex"><svg><use href="#i-split"/></svg>Línea de partición1</li>
      <li><svg><use href="#i-cham"/></svg>Chaflán1</li>
      <li class="ex off"><svg><use href="#i-ext"/></svg>Extruir-Lámina1</li>
      <li class="off"><svg><use href="#i-fil"/></svg>Redondeo1</li>
      <li class="ex off"><svg><use href="#i-ext"/></svg>Extruir-Lámina2</li>
      <li class="off"><svg><use href="#i-fil"/></svg>Redondeo2</li>
      <li class="off"><svg><use href="#i-planeb"/></svg>Plano1</li>
      <li class="ex off"><svg><use href="#i-ext"/></svg>Extruir-Lámina3</li>
      <li class="off"><svg><use href="#i-fil"/></svg>Redondeo3</li>
      <li class="ex off"><svg><use href="#i-ext"/></svg>Extruir-Lámina4</li>
      <li class="off"><svg><use href="#i-fil"/></svg>Redondeo4</li>
      <li class="off"><svg><use href="#i-sdel"/></svg>Sólido-Eliminar/Conservar 1</li>
    </ul>
    <div class="rollback"></div>
    <div class="hscroll"><svg viewBox="0 0 10 10"><path d="M7 1L3 5l4 4" fill="none" stroke="#444" stroke-width="2"/></svg><div class="track"><i></i></div><svg viewBox="0 0 10 10"><path d="M3 1l4 4-4 4" fill="none" stroke="#444" stroke-width="2"/></svg></div>
    <div class="peek"><span>Extruir-Lámina5</span></div>
    <div class="handle"><i></i></div>
  </section>

  <section class="view">
    <svg class="scene" viewBox="334 140 1586 871">
      <defs>
        <linearGradient id="m-cap" gradientUnits="userSpaceOnUse" x1="560" y1="300" x2="625" y2="340"><stop offset="0" stop-color="#989fb2"/><stop offset=".45" stop-color="#b3bbcf"/><stop offset="1" stop-color="#a9b1c4"/></linearGradient>
        <linearGradient id="m-cap2" gradientUnits="userSpaceOnUse" x1="500" y1="380" x2="565" y2="415"><stop offset="0" stop-color="#989fb2"/><stop offset=".45" stop-color="#b3bbcf"/><stop offset="1" stop-color="#a9b1c4"/></linearGradient>
        <linearGradient id="m-end" gradientUnits="userSpaceOnUse" x1="1125" y1="670" x2="1172" y2="722"><stop offset="0" stop-color="#b2bacf"/><stop offset=".4" stop-color="#a5adc0"/><stop offset=".75" stop-color="#7d8494"/><stop offset="1" stop-color="#555963"/></linearGradient>
        <linearGradient id="m-hole" x1=".7" y1="0" x2=".4" y2=".9"><stop offset="0" stop-color="#555a63"/><stop offset=".5" stop-color="#838a99"/><stop offset="1" stop-color="#a8b0c2"/></linearGradient>
        <linearGradient id="m-hole2" x1="0" y1=".4" x2="1" y2=".6"><stop offset="0" stop-color="#6c727e"/><stop offset=".35" stop-color="#a4acbf"/><stop offset=".6" stop-color="#b0b8cc"/><stop offset="1" stop-color="#9da4b6"/></linearGradient>
      </defs>
      <path class="plane" d="M1241 680L733 381M577 290L547.500 272.500L457 385"/>
      <g class="edge">
        <path d="M638 301L763 409L690 368L667 369L618.500 325z" fill="#b0b8cc"/>
        <path d="M559 312L577 289C590 278 616 281 638 301L618.500 325C600 308 572 303 559 312z" fill="url(#m-cap)"/>
        <path d="M553.500 330C553 315 562 307 576 307.500C592 308 607 315 618.500 325L667 369L637.500 404.500L580 371C562 359 554 344 553.500 330z" fill="#555961"/>
        <ellipse cx="596.500" cy="346.500" rx="29.500" ry="18.500" transform="rotate(38 596.500 346.500)" fill="url(#m-hole)"/>
        <path d="M667 369L690.500 367L670.500 393.500L650 419L626 420.500z" fill="#a2a8bc"/>
        <path d="M645.500 395.500L670.500 393.500" fill="none"/>
        <path d="M690.500 367L1150.500 637.500L1110.500 688L650 419z" fill="#b2bacf"/>
        <path d="M1150.500 637.500C1170 650 1186 671 1185.500 690Q1185.500 697 1181 702L1142 748L1110.500 688z" fill="url(#m-end)"/>
        <path d="M670.500 393.500L1130.500 663.500C1150 676 1166 697 1165 712L1163 721" fill="none"/>
        <path d="M626 420.500L650 419L1110.500 688C1131 701 1146 722 1145 738C1144 759 1120 764 1083 741L816 587z" fill="#555961"/>
        <ellipse cx="828.500" cy="558" rx="24.500" ry="16.500" transform="rotate(38 828.500 558)" fill="url(#m-hole2)"/>
        <ellipse cx="1101.500" cy="718.500" rx="24.500" ry="16.500" transform="rotate(38 1101.500 718.500)" fill="url(#m-hole2)"/>
        <path d="M576 377.500L626 420.500L816 586L796 611L556.500 402.500z" fill="#afb7cb"/>
        <path d="M500 387L518 365C530 354 556 358 576 377.500L556.500 402.500C538 385 512 380 500 387z" fill="url(#m-cap2)"/>
        <path d="M491.500 405C491 390 502 384 516 384.500C530 385 545 391 556.500 402.500L796 611L530 455C505 440 492 425 491.500 405z" fill="#555961"/>
      </g>
      <path class="plane" d="M457 385L1151 793L1241 680"/>
      <path class="plane" d="M1121 692L1100 680M1116 692h11M1121.500 687v11M1117.500 688l8 8M1125.500 688l-8 8M1121 693l-2 8"/>
      <path d="M1094 676l10 1-4 5zM1117 694h7l-3 8z" fill="#00f"/>
      <text class="ptext" transform="translate(484 381) rotate(-51.500)">Vista lateral</text>
      <g>
        <path d="M374 953l-17-9.500" stroke="#1c7a24" stroke-width="4"/><path d="M349 939l9-1-2 9z" fill="#175c1c" stroke="#175c1c"/>
        <path d="M374 953l11-14" stroke="#1a1aa8" stroke-width="4"/><path d="M381 938l8-3-1 8-5-1z" fill="#1a1ad0" stroke="#1a1ad0"/>
        <path d="M374 953l-4 12" stroke="#8e1b1b" stroke-width="4"/><path d="M366 963h8v5l-4 3-4-3z" fill="#d61c1c"/>
        <path d="M342 930l3.500 4 3.500-4M345.500 934v5" stroke="#0a8a14" fill="none"/>
        <path d="M387 925.500h5l-5 8h5" stroke="#11f" fill="none"/>
        <path d="M366 969l5 8m0-8l-5 8" stroke="#f11" fill="none"/>
      </g>
    </svg>
    <nav class="taskpane">
      <button><svg><use href="#i-home"/></svg></button><button><svg><use href="#i-books"/></svg></button><button><svg><use href="#i-folder"/></svg></button><button><svg><use href="#i-pal"/></svg></button><button class="on"><svg><use href="#i-ball"/></svg></button><button><svg><use href="#i-prop"/></svg></button>
    </nav>
  </section>
</main>

<nav class="mtabs">
  <div class="vcr">
    <button><svg viewBox="0 0 10 10"><path d="M1.500 1v8M9 1v8L3 5z" fill="#777" stroke="#777"/></svg></button>
    <button><svg viewBox="0 0 10 10"><path d="M8 1v8L2 5z" fill="#777"/></svg></button>
    <button><svg viewBox="0 0 10 10"><path d="M2 1v8l6-4z" fill="#777"/></svg></button>
    <button><svg viewBox="0 0 10 10"><path d="M8.500 1v8M1 1v8l6-4z" fill="#777" stroke="#777"/></svg></button>
  </div>
  <button class="on">Modelo</button><button>Vistas 3D</button><button class="wide">Estudio de movimiento 1</button>
</nav>

<div class="fbar">
  <div class="vgrip"></div>
  <button class="ib"><svg><use href="#i-f1"/></svg></button><button class="ib"><svg><use href="#i-f3"/></svg></button><button class="ib"><svg><use href="#i-f3p"/></svg></button>
  <div class="sel"><button class="ib"><svg><use href="#i-arrow"/></svg></button><i class="dd"></i></div>
  <button class="ib"><svg><use href="#i-selx"/></svg></button>
  <div class="fsep"></div>
  <button class="ib"><svg><use href="#b1"/></svg></button><button class="ib"><svg><use href="#b2"/></svg></button><button class="ib"><svg><use href="#b3"/></svg></button><button class="ib"><svg><use href="#b4"/></svg></button><button class="ib"><svg><use href="#b5"/></svg></button><button class="ib"><svg><use href="#b6"/></svg></button><button class="ib"><svg><use href="#b7"/></svg></button><button class="ib"><svg><use href="#b8"/></svg></button><button class="ib"><svg><use href="#b9"/></svg></button><button class="ib"><svg><use href="#b10"/></svg></button><button class="ib"><svg><use href="#b11"/></svg></button><button class="ib"><svg><use href="#b12"/></svg></button><button class="ib"><svg><use href="#b13"/></svg></button><button class="ib"><svg><use href="#b14"/></svg></button><button class="ib"><svg><use href="#b15"/></svg></button><button class="ib"><svg><use href="#b16"/></svg></button><button class="ib"><svg><use href="#b17"/></svg></button><button class="ib"><svg><use href="#b18"/></svg></button><button class="ib"><svg><use href="#b19"/></svg></button><button class="ib"><svg><use href="#b20"/></svg></button><button class="ib"><svg><use href="#b21"/></svg></button><button class="ib"><svg><use href="#b22"/></svg></button><button class="ib"><svg><use href="#b23"/></svg></button><button class="ib"><svg><use href="#b24"/></svg></button><button class="ib"><svg><use href="#b25"/></svg></button><button class="ib"><svg><use href="#b26"/></svg></button>
  <div class="fsep end"></div>
</div>

<footer class="status">
  <span class="edition">SOLIDWORKS Premium 2017 x64 Edition</span>
  <span class="cell w8"></span>
  <span class="cell mode">Editando Pieza</span>
  <span class="cell w16"></span>
  <span class="cell units">MMGS</span>
  <i class="up"></i>
  <svg><use href="#i-tag"/></svg>
</footer>
</body>
</html>
```
FILE: styles.css
```css
* { box-sizing: border-box; }
html, body { height: 100%; }
body {
  margin: 0; display: flex; flex-direction: column; overflow: hidden;
  background: #f7f7f7; color: #000;
  font: 12px/16px Roboto, "Noto Sans", sans-serif;
}
button, input { font: inherit; color: inherit; border: 0; padding: 0; margin: 0; background: none; }
a { color: inherit; text-decoration: none; }
ul { list-style: none; margin: 0; padding: 0; }
.defs { position: absolute; width: 0; height: 0; }
svg { display: block; flex: none; width: 18px; height: 18px; }

.ib { width: 25px; display: flex; justify-content: center; align-items: center; flex: none; }
.dd { width: 14px; flex: none; display: flex; justify-content: center; }
.dd::before { content: ""; border: 3px solid transparent; border-top: 4px solid #444; border-bottom: 0; }
.dd.off::before { border-top-color: #999; }
.sel { display: flex; align-items: center; border: 1px solid #888; height: 26px; }
.sel .ib { background: #b0b0b0; height: 100%; border-right: 1px solid #888; }

.titlebar {
  height: 31px; display: flex; align-items: center; border-bottom: 1px solid #888;
  font: 11px/14px "Open Sans", "Noto Sans", sans-serif; padding: 2px 0 0 10px; flex: none;
}
.logo {
  width: 145px; height: 35px; margin: -2px 22px 0 0; align-self: flex-start; z-index: 2; flex: none;
  border: 1px solid #999; border-top: 0; background: linear-gradient(#fff 50%, #ddd);
  display: flex; align-items: center; padding-left: 4px; gap: 2px; color: #d8291c;
}
.logo-ds { width: 30px; height: 30px; }
.logo-text { font: italic 17px/22px "Open Sans", sans-serif; padding-top: 6px; }
.logo-text b { font-weight: 700; }
.menu { display: flex; align-items: center; align-self: stretch; gap: 15px; border-right: 2px solid #bbb; width: 397px; padding-left: 6px; flex: none; }
.menu .ib { margin-left: auto; margin-right: 2px; }
.menu .ib svg { width: 14px; height: 14px; }
.quick { display: flex; align-items: center; padding-left: 13px; width: 344px; flex: none; }
.doc { flex: 1; margin: 0; font: inherit; text-align: center; white-space: nowrap; }
.search { width: 253px; height: 23px; border: 1px solid #bbb; display: flex; align-items: center; padding: 0 0 0 5px; flex: none; }
.search .cmd { width: 16px; height: 16px; }
.search input { flex: 1; min-width: 0; background: #eaebef; height: 19px; margin: 0 4px 0 3px; padding-left: 2px; }
.search input::placeholder { color: #666; opacity: 1; }
.wctl { display: flex; align-items: center; padding-left: 6px; width: 121px; color: #333; flex: none; }
.wctl .ib { width: 26px; }
.wctl .help { width: 22px; font: bold 17px/20px "Open Sans", sans-serif; }

.ribbon {
  height: 87px; display: flex; align-items: center; border-bottom: 1px solid #777; flex: none;
  font: 11px/13px "Open Sans", "Noto Sans", sans-serif; padding-top: 2px;
}
.rsep { width: 1px; height: 78px; background: #bbb; flex: none; }
.big { align-self: stretch; padding-top: 17px; display: flex; flex-direction: column; align-items: center; text-align: center; flex: none; }
.big span { padding-top: 1px; }
.big.top { padding-top: 10px; }
.big.top .dd { padding-top: 14px; }
.big.tight { padding-left: 6px; padding-right: 6px; }
.big.first { padding-left: 4px; }
.w42 { width: 42px; } .w60 { width: 60px; } .w72 { width: 72px; } .w76 { width: 76px; }
.w100 { width: 100px; } .w102 { width: 102px; }
.w150 { width: 150px; } .w154 { width: 154px; } .w192 { width: 192px; } .w196 { width: 196px; }
.gap { margin-left: 4px; }
.big.w100 { padding-left: 6px; padding-right: 6px; }
.rlist { display: flex; flex-direction: column; flex: none; }
.rlist button { height: 26px; display: flex; align-items: center; gap: 7px; padding-left: 2px; white-space: nowrap; }
.rlist button:disabled { color: #aaa; }
.rlist button:disabled svg { filter: grayscale(1); opacity: .35; }

.tabrow { height: 22px; display: flex; background: #fff; flex: none; z-index: 1; }
.ctabs { display: flex; width: 570px; background: #fff; flex: none; }
.ctabs button { background: #d5d5d5; border-right: 1px solid #888; border-bottom: 1px solid #888; padding: 0 7px; white-space: nowrap; color: #222; }
.ctabs .on { background: #fff; border-bottom-color: #fff; font-weight: bold; }
.hud { display: flex; align-items: center; height: 20px; margin: 5px auto 0 376px; }
.hud .ib { width: 26px; }
.hud svg { opacity: .85; }
.dctl { display: flex; align-items: center; height: 20px; margin: 5px 7px 0 0; color: #999; }
.dctl .ib { width: 26px; }
.dctl svg { width: 16px; height: 16px; }

.main { flex: 1; display: flex; min-height: 0; }
.side { width: 32px; flex: none; }
.grip { height: 4px; margin: 2px 2px 10px; border-bottom: 2px dotted #999; width: 28px; }
.sgroup { display: flex; flex-direction: column; align-items: center; width: 32px; }
.sgroup svg { margin: 0 0 8px; }
.sgroup svg:last-child { margin-bottom: 6px; }
.sgroup.dim { opacity: .6; padding-top: 1px; }
.sgroup.line { border-top: 1px solid #999; padding-top: 9px; }
.sgroup.last { border-bottom: 1px solid #999; padding-bottom: 5px; }

.panel { width: 302px; flex: none; border-right: 1px solid #888; display: flex; flex-direction: column; position: relative; padding: 2px 2px 0 0; }
.split { height: 16px; border: 1px solid #bbb; border-width: 1px 0; display: flex; justify-content: center; align-items: center; margin-bottom: 4px; flex: none; }
.split i, .handle i { width: 6px; height: 6px; border-radius: 50%; background: #ccc; border: 1px solid #999; }
.ptabs { display: flex; height: 26px; border-bottom: 1px solid #999; flex: none; align-items: center; }
.ptabs button { width: 40px; height: 26px; background: #d5d5d5; border: 1px solid #888; border-left: 0; display: flex; align-items: center; justify-content: center; align-self: flex-start; }
.ptabs .on { background: #f7f7f7; border-bottom-color: #f7f7f7; }
.ptabs .chev { width: 10px; height: 10px; margin: 0 5px 0 auto; }
.filter { height: 26px; border: 1px solid #bbb; margin: 0 2px 0 3px; display: flex; align-items: center; padding-left: 2px; flex: none; }
.filter input { flex: 1; min-width: 0; }
.root { height: 22px; display: flex; align-items: center; gap: 4px; padding-left: 3px; white-space: nowrap; overflow: hidden; flex: none; margin-top: 1px; }
.tree li { height: 22px; display: flex; align-items: center; gap: 5px; padding-left: 24px; white-space: nowrap; }
.tree svg { width: 19px; height: 19px; }
.tree li::before { content: ""; width: 0; margin-left: -16px; margin-right: 7px; border: 4px solid transparent; border-right: 0; }
.tree li.ex::before { border-left-color: #555; }
.tree .off { color: #808080; }
.tree .off svg { filter: grayscale(1); opacity: .5; }
.rollback { height: 3px; background: #2e8fd0; border-bottom: 1px solid #1a10a0; flex: none; }
.hscroll { height: 16px; margin-top: auto; display: flex; align-items: center; background: #f0f0f0; flex: none; }
.hscroll svg { width: 10px; height: 10px; margin: 0 3px; }
.track { flex: 1; height: 16px; }
.track i { display: block; width: 80%; height: 16px; background: #cdcdcd; }
.peek { height: 6px; overflow: hidden; border-bottom: 1px solid #bbb; color: #999; padding-left: 72px; flex: none; }
.peek span { display: block; line-height: 6px; }
.handle { position: absolute; right: -9px; top: 405px; width: 9px; height: 39px; background: #f7f7f7; border: 1px solid #888; border-left: 0; display: flex; align-items: center; justify-content: center; z-index: 2; }

.view { flex: 1; min-width: 0; background: #fff; position: relative; }
.scene { width: 100%; height: 100%; }
.plane { fill: none; stroke: #1414ff; stroke-width: 1.2; }
.edge { stroke: #111; stroke-width: 1.1; stroke-linejoin: round; }
.ptext { font: bold 23px Lato, sans-serif; fill: #2020e8; }
.taskpane { position: absolute; top: 29px; right: 0; border: 1px solid #888; border-right: 0; }
.taskpane button { display: flex; width: 25px; height: 24px; align-items: center; justify-content: center; background: #d5d5d5; border-bottom: 1px solid #888; }
.taskpane button:last-child { border-bottom: 0; }
.taskpane .on { background: #fff; }

.mtabs { height: 17px; display: flex; border-top: 1px solid #888; padding-left: 32px; flex: none; }
.mtabs > button { background: #d5d5d5; border-right: 1px solid #888; padding: 0 8px 2px; line-height: 13px; height: 15px; }
.mtabs > .on { background: #f7f7f7; font-weight: bold; padding: 0 8px 2px 14px; }
.mtabs > .wide { padding-right: 20px; }
.vcr { display: flex; background: #999; border-right: 1px solid #777; }
.vcr button { width: 16px; height: 15px; background: #aaa; border: 1px solid #888; display: flex; align-items: center; justify-content: center; }
.vcr svg { width: 9px; height: 9px; }
.fbar { height: 32px; display: flex; align-items: center; border-bottom: 1px solid #888; flex: none; }
.fbar .ib { width: 27px; }
.vgrip { width: 3px; height: 26px; border-left: 2px dotted #999; margin: 0 7px 0 3px; }
.fsep { width: 1px; height: 24px; background: #888; margin: 0 0 0 5px; }
.fsep.end { margin-left: 9px; }
.status { height: 20px; display: flex; align-items: center; flex: none; padding-left: 1px; }
.edition { flex: 1; }
.cell { height: 16px; border-left: 1px solid #ccc; flex: none; }
.w8 { width: 8px; } .w16 { width: 16px; }
.mode { width: 87px; padding-left: 3px; }
.units { width: 129px; text-align: center; padding-left: 18px; }
.up { border: 3px solid transparent; border-bottom-color: #333; border-top: 0; margin: 0 66px 0 2px; }
.status svg { margin-right: 3px; width: 17px; height: 17px; }
```
